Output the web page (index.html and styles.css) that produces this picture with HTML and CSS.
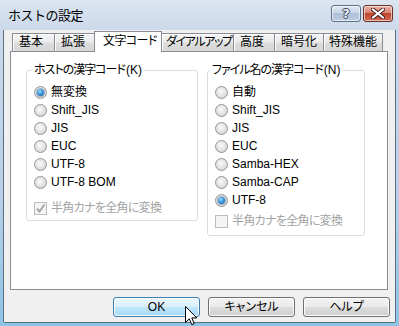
FILE: index.html
```html
<!DOCTYPE html>
<html lang="ja">
<head>
<meta charset="utf-8">
<title>ホストの設定</title>
<link rel="stylesheet" href="styles.css">
</head>
<body>
<div class="window">
  <div class="titlebar">
    <span class="title">ホストの設定</span>
    <div class="caption">
      <div class="cap-btn cap-help"><span class="q">?</span></div>
      <div class="cap-btn cap-close">
        <svg width="14" height="11" viewBox="0 0 14 11">
          <path d="M2 1.5 L12 9.5 M12 1.5 L2 9.5" stroke="#4a2020" stroke-width="4" stroke-linecap="square"/>
          <path d="M2 1.5 L12 9.5 M12 1.5 L2 9.5" stroke="#ffffff" stroke-width="2" stroke-linecap="square"/>
        </svg>
      </div>
    </div>
  </div>
  <div class="client">
    <div class="tabs">
      <div class="tab w1">基本</div>
      <div class="tab w2">拡張</div>
      <div class="tab sel w3">文字コード</div>
      <div class="tab w4">ダイアルアップ</div>
      <div class="tab w5">高度</div>
      <div class="tab w6">暗号化</div>
      <div class="tab w7">特殊機能</div>
    </div>
    <div class="panel">
      <fieldset class="group group-host">
        <legend>ホストの漢字コード<span class="acc">(K)</span></legend>
        <div class="group-body">
          <div class="opt"><span class="radio on"></span><span>無変換</span></div>
          <div class="opt"><span class="radio"></span><span>Shift_JIS</span></div>
          <div class="opt"><span class="radio"></span><span>JIS</span></div>
          <div class="opt"><span class="radio"></span><span>EUC</span></div>
          <div class="opt"><span class="radio"></span><span>UTF-8</span></div>
          <div class="opt"><span class="radio"></span><span>UTF-8 BOM</span></div>
          <div class="opt check-row check-host">
            <span class="check">
              <svg width="11" height="11" viewBox="0 0 11 11"><path d="M2 5.5 L4.5 8.5 L9.5 1.5" fill="none" stroke="#a8a8a8" stroke-width="2"/></svg>
            </span>
            <span class="dis">半角カナを全角に変換</span>
          </div>
        </div>
      </fieldset>
      <fieldset class="group group-file">
        <legend>ファイル名の漢字コード<span class="acc">(N)</span></legend>
        <div class="group-body">
          <div class="opt"><span class="radio"></span><span>自動</span></div>
          <div class="opt"><span class="radio"></span><span>Shift_JIS</span></div>
          <div class="opt"><span class="radio"></span><span>JIS</span></div>
          <div class="opt"><span class="radio"></span><span>EUC</span></div>
          <div class="opt"><span class="radio"></span><span>Samba-HEX</span></div>
          <div class="opt"><span class="radio"></span><span>Samba-CAP</span></div>
          <div class="opt"><span class="radio on"></span><span>UTF-8</span></div>
          <div class="opt check-row check-file">
            <span class="check"></span>
            <span class="dis">半角カナを全角に変換</span>
          </div>
        </div>
      </fieldset>
    </div>
    <div class="buttons">
      <div class="btn hover">OK</div>
      <div class="btn">キャンセル</div>
      <div class="btn">ヘルプ</div>
    </div>
  </div>
  <svg class="cursor" width="13" height="21" viewBox="0 0 13 21">
    <path d="M0.5 0.5 L0.5 16.5 L4.3 12.8 L6.8 18.6 L9.2 17.6 L6.8 11.9 L11.8 11.9 Z" fill="#ffffff" stroke="#000000" stroke-width="1" stroke-linejoin="miter"/>
  </svg>
</div>
</body>
</html>
```

FILE: styles.css
```css
* { box-sizing: border-box; }

html, body {
  margin: 0;
  padding: 0;
  background: #ffffff;
}

body {
  font-family: "Liberation Sans", "Noto Sans CJK JP", sans-serif;
  font-size: 12px;
  color: #000000;
  font-feature-settings: "palt";
}

.window {
  position: relative;
  width: 399px;
  height: 326px;
  display: flex;
  flex-direction: column;
  background: linear-gradient(to bottom, #dbe5f1 0px, #cbd9ea 30px, #b7cfe7 200px, #8cc4e6 326px);
  overflow: hidden;
}

.titlebar {
  height: 30px;
  flex: none;
  display: flex;
  align-items: flex-start;
  justify-content: space-between;
  padding: 0 6px 0 8px;
}

.title {
  margin-top: 6px;
  line-height: 17px;
  font-size: 13px;
  font-family: "Noto Sans CJK JP", sans-serif;
  font-feature-settings: normal;
  letter-spacing: -0.5px;
}

.caption {
  display: flex;
  gap: 2px;
  margin-top: 5px;
}

.cap-btn {
  width: 30px;
  height: 17px;
  border: 1px solid #5f6f84;
  border-radius: 3px;
  display: flex;
  align-items: center;
  justify-content: center;
  box-shadow: inset 0 0 0 1px rgba(255,255,255,0.6);
}

.cap-help {
  background: linear-gradient(to bottom, #dfe7f1 0%, #c9d6e6 45%, #afc1d8 50%, #bccde2 100%);
}

.cap-help .q {
  font-family: "DejaVu Sans", sans-serif;
  font-weight: bold;
  font-size: 13px;
  line-height: 13px;
  color: #e8edf3;
  text-shadow: 1px 0 0 #3e4a5a, -1px 0 0 #3e4a5a, 0 1px 0 #3e4a5a, 0 -1px 0 #3e4a5a;
}

.cap-close {
  border-color: #6b2f2a;
  background: linear-gradient(to bottom, #eab0a3 0%, #d88675 45%, #c2452f 50%, #d26b52 100%);
}

.cap-close svg { display: block; }

.client {
  flex: 1;
  margin: 0 4px 4px 4px;
  background: #f0f0f0;
  box-shadow: -1px 0 0 #5c6e82, 1px 0 0 #5c6e82, 0 1px 0 #5c6e82;
  display: flex;
  flex-direction: column;
}

.tabs {
  display: flex;
  align-items: flex-end;
  margin: 1px 0 0 8px;
  height: 20px;
}

.tab {
  height: 18px;
  border: 1px solid #898c95;
  border-bottom: none;
  background: linear-gradient(to bottom, #f3f3f3 0%, #ebebeb 45%, #dcdcdc 55%, #d6d6d6 100%);
  box-shadow: inset 1px 1px 0 #ffffff;
  padding-left: 6px;
  line-height: 16px;
  white-space: nowrap;
  margin-left: -1px;
  overflow: hidden;
}

.tab.w1 { width: 43px; margin-left: 0; }
.tab.w2 { width: 42px; }
.tab.w3 { width: 68px; letter-spacing: -0.6px; }
.tab.w4 { width: 73px; padding-left: 4px; letter-spacing: -1.4px; }
.tab.w5 { width: 42px; }
.tab.w6 { width: 50px; }
.tab.w7 { width: 60px; padding-left: 5px; }

.tab.sel {
  position: relative;
  z-index: 2;
  height: 21px;
  margin-bottom: -1px;
  margin-left: -2px;
  background: #ffffff;
  box-shadow: none;
  padding-left: 8px;
  line-height: 18px;
}

.panel {
  margin-left: 6px;
  width: 378px;
  height: 239px;
  background: #ffffff;
  border: 1px solid #898c95;
  display: flex;
  align-items: flex-start;
  gap: 9px;
  padding: 11px 0 0 15px;
}

.group {
  margin: 0;
  padding: 0;
  min-inline-size: 0;
  border: 1px solid #d5dfe5;
  border-radius: 3px;
}

.group-host { width: 172px; }
.group-file { width: 158px; }

.group legend {
  margin-left: 5px;
  padding: 0 2px;
  line-height: 14px;
  white-space: nowrap;
  letter-spacing: -1px;
}

.group legend .acc {
  letter-spacing: 0;
  margin-left: 1px;
}

.group-file legend { margin-left: 2px; }

.group-body {
  padding: 6px 0 3px 7px;
}

.group-file .group-body { padding-bottom: 5px; }

.opt {
  display: flex;
  align-items: center;
  gap: 4px;
  height: 18px;
  line-height: 18px;
  white-space: nowrap;
}

.check-host { margin-top: 8px; }
.check-file { margin-top: 3px; }

.radio {
  flex: none;
  position: relative;
  width: 13px;
  height: 13px;
  border-radius: 50%;
  border: 1px solid #959595;
  background: radial-gradient(circle at 45% 40%, #fbfbfb 0%, #e6e6e6 45%, #c9c9c9 100%);
}

.radio.on::after {
  content: "";
  position: absolute;
  left: 2px;
  top: 2px;
  width: 7px;
  height: 7px;
  border-radius: 50%;
  background: radial-gradient(circle at 40% 35%, #a9e0fb 0%, #3f9be0 40%, #145a9c 100%);
  box-shadow: 0 0 0 1px rgba(30,80,130,0.35);
}

.check {
  flex: none;
  width: 13px;
  height: 13px;
  border: 1px solid #bcbcbc;
  background: #f4f4f4;
  display: flex;
  align-items: center;
  justify-content: center;
}

.check svg { display: block; }

.dis {
  color: #a3a3a3;
  letter-spacing: -0.7px;
}

.buttons {
  display: flex;
  justify-content: flex-end;
  gap: 8px;
  margin-top: 7px;
  padding-right: 5px;
}

.btn {
  width: 87px;
  height: 20px;
  border: 1px solid #707070;
  border-radius: 3px;
  background: linear-gradient(to bottom, #f2f2f2 0%, #ebebeb 48%, #dddddd 52%, #cfcfcf 100%);
  box-shadow: inset 0 0 0 1px #fbfbfb;
  text-align: center;
  line-height: 18px;
  white-space: nowrap;
}

.btn.hover {
  border-color: #3c7fb1;
  background: linear-gradient(to bottom, #eaf6fd 0%, #d9f0fc 48%, #bee6fd 52%, #a7d9f5 100%);
}

.cursor {
  position: absolute;
  left: 185px;
  top: 306px;
}
```
